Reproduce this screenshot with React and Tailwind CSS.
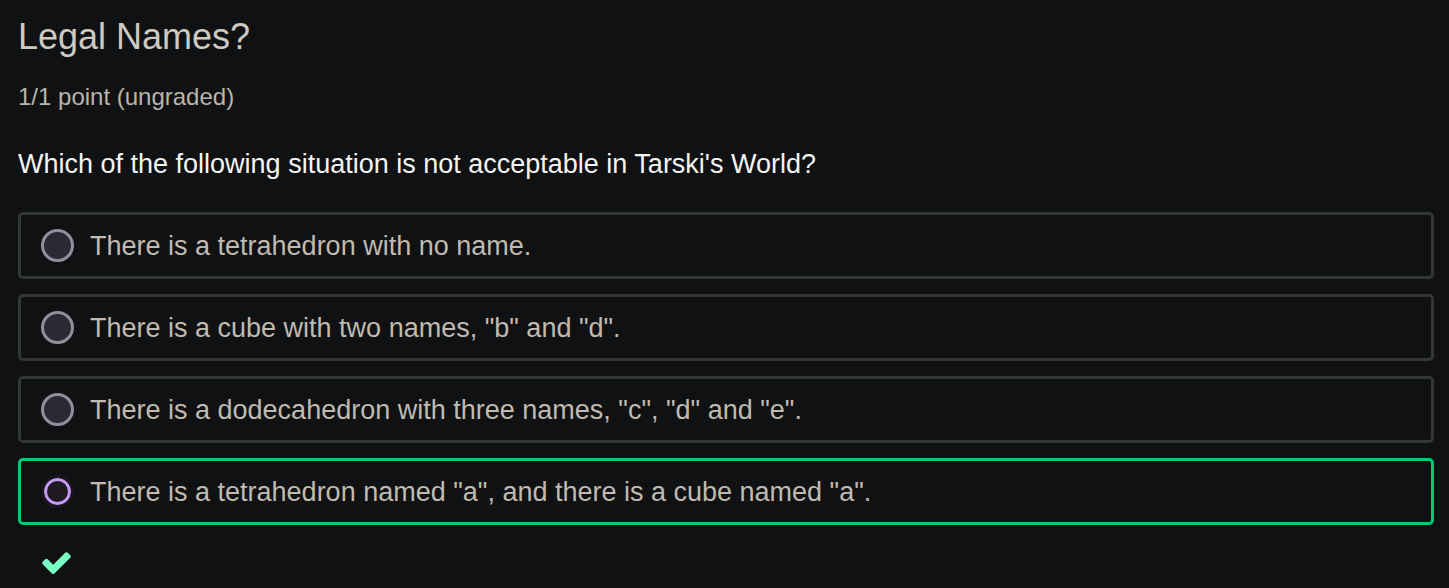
import { useState } from "react";

const choices = [
  "There is a tetrahedron with no name.",
  'There is a cube with two names, "b" and "d".',
  'There is a dodecahedron with three names, "c", "d" and "e".',
  'There is a tetrahedron named "a", and there is a cube named "a".',
];
const correct = 3;

function Choice({ index, text, checked, onSelect }) {
  const isCorrect = checked && index === correct;
  return (
    <label
      className={`flex cursor-pointer items-center gap-4 rounded-[5px] border-3 py-3.5 pl-5 pr-4 ${
        isCorrect ? "border-[#08c974]" : "border-[#323635]"
      }`}
    >
      <input
        type="radio"
        name="choice"
        checked={checked}
        onChange={() => onSelect(index)}
        className="size-[33px] shrink-0 appearance-none rounded-full border-3 border-[#8f8f9d] bg-[#2b2a33] checked:border-[#1a161d] checked:bg-[#1f1922] checked:inset-ring-3 checked:inset-ring-[#c599f5]"
      />
      <span className="pt-0.5 text-[27px] leading-[31px] text-[#c0bab0]">{text}</span>
    </label>
  );
}

export default function App() {
  const [selected, setSelected] = useState(correct);
  return (
    <main className="min-h-screen bg-[#0f1112] pt-[15px] pr-[15px] pl-[18px] font-['Liberation_Sans',Arial,sans-serif]">
      <h1 className="text-[36px] leading-[44px] text-[#cec9c1]">Legal Names?</h1>
      <p className="mt-[23px] text-[24px] leading-[30px] text-[#bbb4aa]">1/1 point (ungraded)</p>
      <fieldset className="mt-9">
        <legend className="text-[27px] leading-[32px] text-[#f5f4f2]">
          Which of the following situation is not acceptable in Tarski's World?
        </legend>
        <div className="mt-8 flex flex-col gap-[15px]">
          {choices.map((text, i) => (
            <Choice key={text} index={i} text={text} checked={selected === i} onSelect={setSelected} />
          ))}
        </div>
      </fieldset>
      <div className="mt-[21px] h-[33px] pl-[22px]">
        {selected === correct && (
          <svg role="img" aria-label="Correct" viewBox="0 0 1792 1792" className="size-[33px] fill-[#7affc3]">
            <path d="M1671 566q0 40-28 68l-724 724-136 136q-28 28-68 28t-68-28l-136-136-362-362q-28-28-28-68t28-68l136-136q28-28 68-28t68 28l294 295 656-657q28-28 68-28t68 28l136 136q28 28 28 68z" />
          </svg>
        )}
      </div>
    </main>
  );
}
